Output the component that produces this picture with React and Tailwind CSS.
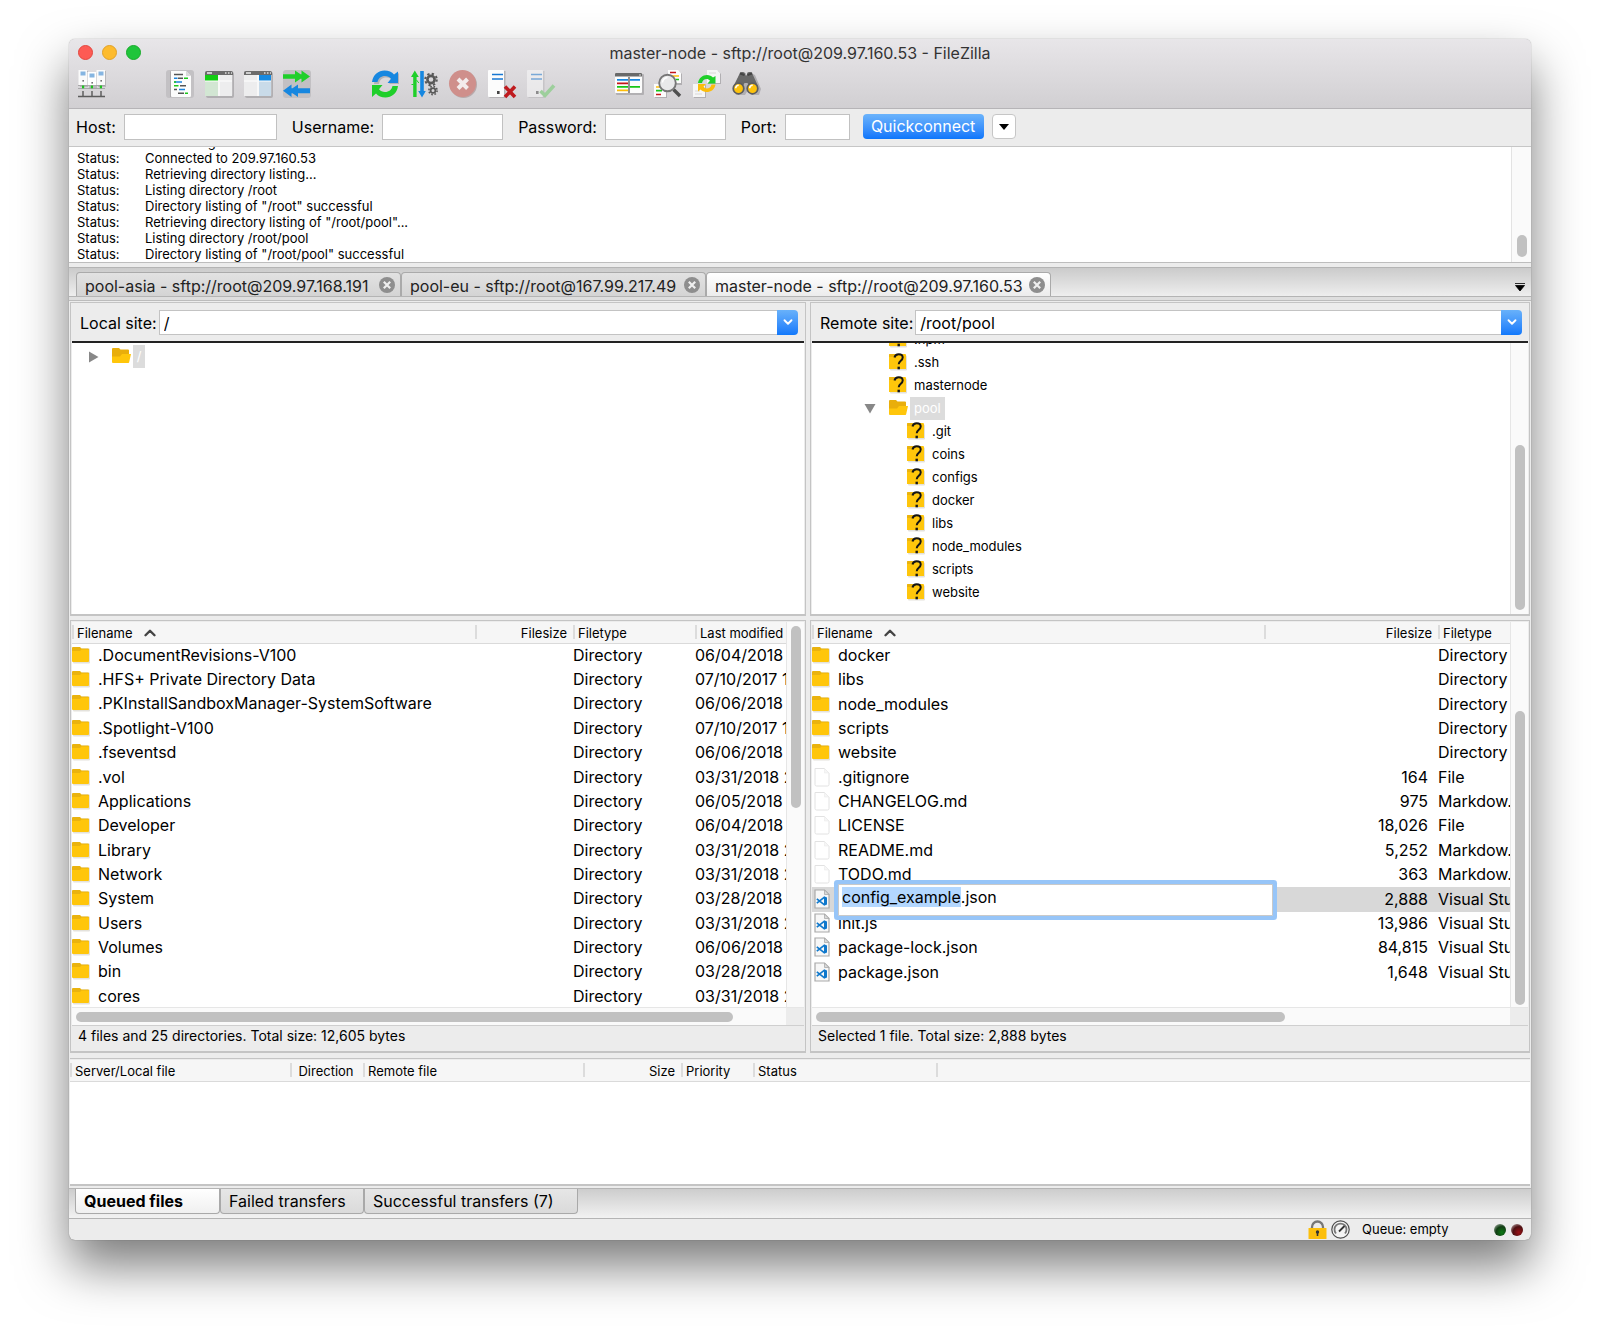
import { useEffect, useRef } from 'react';
import { ChevronDown, ChevronUp } from 'lucide-react';

const LOG = [
  'Connecting to 209.97.160.53...',
  'Connected to 209.97.160.53',
  'Retrieving directory listing...',
  'Listing directory /root',
  'Directory listing of "/root" successful',
  'Retrieving directory listing of "/root/pool"...',
  'Listing directory /root/pool',
  'Directory listing of "/root/pool" successful',
];

const SESSIONS = [
  { name: 'pool-asia - sftp://root@209.97.168.191', width: 'w-[325px]' },
  { name: 'pool-eu - sftp://root@167.99.217.49', width: 'w-[305px]' },
  { name: 'master-node - sftp://root@209.97.160.53', width: 'w-[345px]', active: true },
];

const LOCAL_FILES = [
  ['.DocumentRevisions-V100', '06/04/2018 10:12:41'],
  ['.HFS+ Private Directory Data', '07/10/2017 12:01:17'],
  ['.PKInstallSandboxManager-SystemSoftware', '06/06/2018 09:44:02'],
  ['.Spotlight-V100', '07/10/2017 12:03:55'],
  ['.fseventsd', '06/06/2018 09:40:30'],
  ['.vol', '03/31/2018 22:18:09'],
  ['Applications', '06/05/2018 17:26:12'],
  ['Developer', '06/04/2018 11:02:48'],
  ['Library', '03/31/2018 22:31:20'],
  ['Network', '03/31/2018 22:18:09'],
  ['System', '03/28/2018 14:55:31'],
  ['Users', '03/31/2018 22:31:22'],
  ['Volumes', '06/06/2018 09:41:16'],
  ['bin', '03/28/2018 14:57:10'],
  ['cores', '03/31/2018 22:18:10'],
];

const REMOTE_FILES = [
  { name: 'docker', type: 'Directory', kind: 'folder' },
  { name: 'libs', type: 'Directory', kind: 'folder' },
  { name: 'node_modules', type: 'Directory', kind: 'folder' },
  { name: 'scripts', type: 'Directory', kind: 'folder' },
  { name: 'website', type: 'Directory', kind: 'folder' },
  { name: '.gitignore', size: '164', type: 'File', kind: 'file' },
  { name: 'CHANGELOG.md', size: '975', type: 'Markdow...', kind: 'file' },
  { name: 'LICENSE', size: '18,026', type: 'File', kind: 'file' },
  { name: 'README.md', size: '5,252', type: 'Markdow...', kind: 'file' },
  { name: 'TODO.md', size: '363', type: 'Markdow...', kind: 'file' },
  { name: 'config_example.json', size: '2,888', type: 'Visual Studio Code', kind: 'code', renaming: true },
  { name: 'init.js', size: '13,986', type: 'Visual Studio Code', kind: 'code' },
  { name: 'package-lock.json', size: '84,815', type: 'Visual Studio Code', kind: 'code' },
  { name: 'package.json', size: '1,648', type: 'Visual Studio Code', kind: 'code' },
];

const POOL_CHILDREN = ['.git', 'coins', 'configs', 'docker', 'libs', 'node_modules', 'scripts', 'website'];

/* ---------- toolbar icons ---------- */

function Icon({ children }) {
  return (
    <svg viewBox="0 0 28 28" className="w-7 h-7 overflow-visible" aria-hidden="true">
      {children}
    </svg>
  );
}

function SiteManagerIcon() {
  return (
    <Icon>
      <g fill="#b9b7ba">
        <rect x="2" y="1" width="8" height="16" />
        <rect x="20" y="1" width="8" height="16" />
        <rect x="11" y="3" width="8" height="16" />
      </g>
      <rect x="0.500" y="0" width="8.500" height="15" fill="#fafafa" />
      <rect x="18.500" y="0" width="8.500" height="15" fill="#fafafa" />
      <rect x="9.500" y="2" width="8.500" height="14" fill="#fff" />
      <g fill="#86b5e1">
        <rect x="2.500" y="1.500" width="5" height="4" />
        <rect x="20.500" y="1.500" width="5" height="4" />
        <rect x="11.500" y="3.500" width="5" height="4" />
      </g>
      <g fill="#555">
        <rect x="4.500" y="10" width="1.300" height="1.600" />
        <rect x="22.500" y="10" width="1.300" height="1.600" />
        <rect x="13.500" y="12" width="1.300" height="1.600" />
      </g>
      <path d="M0 15.500h27M0 18.500h27" stroke="#a3a1a4" strokeWidth="0.900" />
      <g fill="#1fc21f">
        <rect x="4" y="15.500" width="2.200" height="2.800" />
        <rect x="12.800" y="15.500" width="2.200" height="2.800" />
        <rect x="21.800" y="15.500" width="2.200" height="2.800" />
      </g>
      <path d="M5 21v5M14 21v5M23 21v5" stroke="#666" strokeWidth="1.600" />
      <path d="M0 26.500h27" stroke="#5c5c5c" strokeWidth="1.700" />
    </Icon>
  );
}

function LogIcon() {
  return (
    <Icon>
      <rect x="0" y="0" width="28" height="28" rx="3" fill="#c3c1c4" />
      <path d="M4 1.500h16l5 5V27H4z" fill="#aaa8ab" />
      <path d="M5 1h15l5 5v20a1 1 0 0 1-1 1H6a1 1 0 0 1-1-1z" fill="#fcfcfc" />
      <path d="M20 1l5 5h-5z" fill="#dadada" />
      <g strokeWidth="1.500">
        <path d="M8 4.500h9M12 8.300h5M14 15.800h6M8 19.500h3M12 23.300h6" stroke="#555" />
        <path d="M8 8.300h3.500M8 12h8M13 19.500h6" stroke="#1a83dc" />
        <path d="M18 8.300h4M8 15.800h4.500M19 23.300h3M8 12h2" stroke="#1cc81c" />
      </g>
    </Icon>
  );
}

function LocalPaneIcon({ mirrored }) {
  return (
    <Icon>
      <rect x="1" y="2" width="28" height="26" rx="2" fill="#b1afb2" />
      <rect x="0" y="1" width="28" height="25" rx="2" fill="#bcbabd" />
      <path d="M0 3a2 2 0 0 1 2-2h24a2 2 0 0 1 2 2v2H0z" fill="#6b6b6b" />
      <path d="M2 3h5" stroke="#eee" strokeWidth="1.500" />
      <path d="M20 3h1.500M23 3h1.500M26 3h1" stroke="#ddd" strokeWidth="1.500" />
      <rect x="0" y="5" width="13" height="6" fill={mirrored ? '#ededee' : '#14cd14'} />
      <rect x="0" y="11" width="13" height="15" fill={mirrored ? '#ededee' : '#d2e6d3'} />
      <rect x="13" y="5" width="2" height="21" fill="#f8f8f8" />
      <rect x="15" y="5" width="12" height="6" fill={mirrored ? '#1689e0' : '#ededee'} />
      <rect x="15" y="11" width="12" height="15" fill={mirrored ? '#c9dbe9' : '#ededee'} />
      <path d="M0 11h13M15 11h12" stroke="#fff" />
    </Icon>
  );
}

function QueueIcon() {
  return (
    <Icon>
      <rect x="0" y="0" width="28" height="28" rx="3" fill="#c2c0c3" />
      <path d="M0 4.200h12V0.500l5.500 3.700h1V0.500L27 6.500l-8.500 6V8.800h-1L12 12.500V8.800H0z" fill="#1fcf2a" />
      <path d="M27 18.200H15v-3.700l-5.500 3.700h-1v-3.700L0 20.700l8.500 6.300v-3.700h1L15 27v-3.700h12z" fill="#1787e0" />
    </Icon>
  );
}

function RefreshIcon() {
  return (
    <Icon>
      <path d="M2 13C3 5 8 1 14 1c4 0 7 1.500 9 4l4-3v11H17l3.500-4C19 7.500 17 6.500 14.500 6.500 10 6.500 7.500 9 7 13z" fill="#b4b2b5" transform="translate(1 1)" />
      <path d="M1 12C2 4.500 7.500 0.500 13.500 0.500c4 0 7.500 1.500 9.500 4L27 1.500V13H16.500l3.500-4.200C18.500 7 16.500 6 14 6c-4 0-6.700 2.200-7.500 6z" fill="#1787e0" />
      <path d="M27 16c-1 7.500-6.500 11.500-12.500 11.500-4 0-7.500-1.500-9.500-4L1 27V15h10.500L8 19.200C9.500 21 11.500 22 14 22c4 0 6.700-2.200 7.500-6z" fill="#1fcf2a" />
    </Icon>
  );
}

function ProcessQueueIcon() {
  return (
    <Icon>
      <path d="M4.800 0.500L1 7h2.200v20h3.400V7h2.200z" fill="#1fcf2a" />
      <path d="M1.500 14.500h2M6.500 10l2.300 3" stroke="#1fcf2a" />
      <path d="M12 27.500L8.200 21h2V1h3.600v20h2z" fill="#1787e0" />
      <g fill="none" stroke="#585858">
        <circle cx="21" cy="9.500" r="3.600" strokeWidth="2.600" />
        <circle cx="21" cy="9.500" r="5.800" strokeWidth="2" strokeDasharray="2.280 2.280" />
        <circle cx="23" cy="20.500" r="2.400" strokeWidth="1.800" />
        <circle cx="23" cy="20.500" r="4.100" strokeWidth="1.600" strokeDasharray="1.610 1.610" />
      </g>
    </Icon>
  );
}

function CancelIcon() {
  return (
    <Icon>
      <circle cx="14.500" cy="14.500" r="13.500" fill="#b8a9aa" />
      <circle cx="13.500" cy="13.500" r="13.500" fill="#cf8f8b" />
      <path d="M9 9l9.500 9.500M18.500 9L9 18.500" stroke="#f3ecec" strokeWidth="4" />
    </Icon>
  );
}

function ServerIcon({ action }) {
  const faded = action === 'reconnect';
  return (
    <Icon>
      <g opacity={faded ? 0.5 : 1}>
        <rect x="1.500" y="1" width="16" height="27" fill="#b5b3b6" />
        <rect x="0" y="0" width="16" height="27" rx="1" fill="#fcfcfc" />
        <path d="M4 4.500h11M4 9h11" stroke="#1777d2" strokeWidth="1.700" />
        <rect x="9" y="21" width="2.600" height="3" fill="#444" />
      </g>
      {faded ? (
        <path d="M13.500 21l4.500 4.500L27 15.500" fill="none" stroke="#9dcf9c" strokeWidth="3.600" />
      ) : (
        <path d="M17 16.500l10 10.500M27 16.500L17 27" stroke="#bf1b1f" strokeWidth="3.600" />
      )}
    </Icon>
  );
}

function FilterIcon() {
  return (
    <Icon>
      <rect x="1" y="4" width="28" height="21" rx="1" fill="#b2b0b3" />
      <rect x="0" y="3" width="27" height="20" rx="1" fill="#fcfcfc" />
      <path d="M0 6.500V4a1 1 0 0 1 1-1h25a1 1 0 0 1 1 1v2.500z" fill="#696969" />
      <path d="M24 5h2" stroke="#ddd" strokeWidth="1.200" />
      <g strokeWidth="1.700">
        <path d="M2 9.800h11M15 9.800h10" stroke="#1787e0" />
        <path d="M2 13.300h11" stroke="#c4171b" />
        <path d="M2 16.800h11M15 16.800h10" stroke="#17c617" />
        <path d="M2 20.300h11" stroke="#fdbd0a" />
      </g>
      <path d="M14 7v16" stroke="#555" strokeWidth="1.300" />
    </Icon>
  );
}

function CompareIcon() {
  return (
    <Icon>
      <path d="M15 0h9l3 3v11H15zM0 14h12v13H0z" fill="#b1afb2" transform="translate(1 1)" />
      <path d="M14 0h10l3 3v10H14z" fill="#fcfcfc" />
      <path d="M0 14h12v13H0z" fill="#fcfcfc" />
      <g strokeWidth="1.700">
        <path d="M16 2.500h6M2 24.500h5" stroke="#c4171b" />
        <path d="M18 6h7M2 17h4" stroke="#fdbd0a" />
        <path d="M22 9.500h3M2 20.700h6" stroke="#17c617" />
      </g>
      <path d="M19.500 19.500l6.500 6.500" stroke="#4f4f4f" strokeWidth="3.400" />
      <circle cx="13.500" cy="13" r="8.300" fill="#e9e9ea" stroke="#777" strokeWidth="1.900" />
      <path d="M8.500 12.500a5.500 5.500 0 0 1 5-5" fill="none" stroke="#fff" strokeWidth="1.600" />
    </Icon>
  );
}

function SyncBrowseIcon() {
  return (
    <Icon>
      <path d="M14 0h10l3 3v10H14zM0 14h12v13H0z" fill="#b1afb2" transform="translate(1 1)" />
      <path d="M14 0h10l3 3v10H14z" fill="#f6f6f6" />
      <path d="M0 14h12v13H0z" fill="#f6f6f6" />
      <path d="M16 3h7M2 24h7M2 21h5" stroke="#d8d8d8" strokeWidth="1.200" />
      <path d="M5 13c.8-5 4.500-8 9-8 2.500 0 4.600.9 6 2.500L22.500 6v7.500h-8l2.500-2.800C16 9.500 15 9 13.700 9c-2.500 0-4.200 1.500-4.700 4z" fill="#1fcf2a" />
      <path d="M22.500 14.500c-.8 5-4.500 7.500-9 7.500-2.500 0-4.600-.9-6-2.500L5 21.500V14h8l-2.500 2.800c1 1.200 2 1.700 3.300 1.700 2.500 0 4.200-1.500 4.700-4z" fill="#fbbd0c" />
    </Icon>
  );
}

function BinocularsIcon() {
  return (
    <Icon>
      <path d="M6 4l4-2h3v5h2V2h3l4 2 6 14-2 6h-8l-3-5-3 5H3l-2-6z" fill="#b1afb2" transform="translate(1 1)" />
      <path d="M7.500 4a2 2 0 0 1 2-2h1.500a2 2 0 0 1 2 2l.5 1.500h1L15 4a2 2 0 0 1 2-2h1.500a2 2 0 0 1 2 2l5.500 12H17l-1.500-3h-3l-1.500 3H1.500z" fill="#686868" />
      <path d="M8 3.500l4.500 1.500M20 3.500L15.500 5" stroke="#444" strokeWidth="2" />
      <circle cx="6.500" cy="18.500" r="5.300" fill="#fdc20c" stroke="#5e5e5e" strokeWidth="1.700" />
      <circle cx="20.500" cy="18.500" r="5.300" fill="#fdc20c" stroke="#5e5e5e" strokeWidth="1.700" />
      <path d="M3.700 18.200a3 3 0 0 1 3-3M17.700 18.200a3 3 0 0 1 3-3" fill="none" stroke="#fff" strokeWidth="1.500" />
    </Icon>
  );
}

const TOOLBAR = [
  [['Site Manager', <SiteManagerIcon />]],
  [
    ['Toggle message log', <LogIcon />],
    ['Toggle local directory tree', <LocalPaneIcon />],
    ['Toggle remote directory tree', <LocalPaneIcon mirrored />],
    ['Toggle transfer queue', <QueueIcon />],
  ],
  [
    ['Refresh', <RefreshIcon />],
    ['Process queue', <ProcessQueueIcon />],
    ['Cancel', <CancelIcon />],
    ['Disconnect', <ServerIcon action="disconnect" />],
    ['Reconnect', <ServerIcon action="reconnect" />],
  ],
  [
    ['Filename filters', <FilterIcon />],
    ['Directory comparison', <CompareIcon />],
    ['Synchronized browsing', <SyncBrowseIcon />],
    ['Search', <BinocularsIcon />],
  ],
];

/* ---------- file icons ---------- */

function FolderIcon() {
  return (
    <svg viewBox="0 0 18 18" className="w-[18px] h-[18px] shrink-0" aria-hidden="true">
      <rect x="1" y="2.500" width="17" height="15" rx="1" fill="#e4e2dc" />
      <path d="M0 2a1 1 0 0 1 1-1h7l1.500 1.500H16a1 1 0 0 1 1 1V8H0z" fill="#eab30e" />
      <path d="M0 5h8l1.500-1.500H17V15a1 1 0 0 1-1 1H1a1 1 0 0 1-1-1z" fill="#ffc60b" />
    </svg>
  );
}

function OpenFolderIcon() {
  return (
    <svg viewBox="0 0 20 18" className="w-5 h-[18px] mb-[2px] shrink-0" aria-hidden="true">
      <path d="M0 2a1 1 0 0 1 1-1h6l1.500 1.500H16a1 1 0 0 1 1 1V14H0z" fill="#e9ae0b" />
      <path d="M0 16V9.500h8L10 7h9l-1.800 8a1 1 0 0 1-1 1H1a1 1 0 0 1-1-1z" fill="#ffc60b" />
    </svg>
  );
}

function UnknownFolderIcon() {
  return (
    <svg viewBox="0 0 18 18" className="w-[18px] h-[18px] mb-[2px] shrink-0" aria-hidden="true">
      <rect x="1" y="2.500" width="17" height="15" rx="1" fill="#e4e2dc" />
      <path d="M0 2a1 1 0 0 1 1-1h15a1 1 0 0 1 1 1v14H0z" fill="#ffc60b" />
      <path d="M0 2a1 1 0 0 1 1-1h6v2L5 4H0z" fill="#eab30e" />
      <path d="M5.500 4.500C6 2.300 7.500 1.200 9.700 1.200c2.400 0 4 1.300 4 3.300 0 3.200-4 3.200-4 6.700" fill="none" stroke="#151515" strokeWidth="2" />
      <rect x="8.500" y="13.700" width="2.400" height="2.600" fill="#151515" />
    </svg>
  );
}

function PageIcon() {
  return (
    <svg viewBox="0 0 18 20" className="w-[18px] h-5 shrink-0" aria-hidden="true">
      <path d="M3 1.500h9.500L17 6v11.500a1.500 1.500 0 0 1-1.500 1.500H4.500A1.500 1.500 0 0 1 3 17.500z" fill="#fff" stroke="#e2e2e2" />
      <path d="M12.500 1.500V6H17" fill="#f6f6f6" stroke="#ececec" strokeWidth="0.700" />
    </svg>
  );
}

function CodeFileIcon() {
  return (
    <svg viewBox="0 0 18 20" className="w-[18px] h-5 shrink-0" aria-hidden="true">
      <path d="M3 1h9.500L17 5.500V19H3z" fill="#f7f7f7" stroke="#a9a9a9" strokeWidth="1.200" />
      <path d="M12.500 1v4.500H17z" fill="#d9d9d9" stroke="#a9a9a9" strokeWidth="0.800" />
      <path d="M4.800 9.800l7.700 6M4.800 14.200l7.700-6" stroke="#0f78cc" strokeWidth="1.700" />
      <path d="M12 7.300l3 1.200v7l-3 1.200z" fill="#0f78cc" />
    </svg>
  );
}

const FILE_ICONS = { folder: FolderIcon, file: PageIcon, code: CodeFileIcon };

/* ---------- shared bits ---------- */

function CloseBadge({ label }) {
  return (
    <button type="button" aria-label={label} className="w-4 h-4">
      <svg viewBox="0 0 16 16" className="w-4 h-4">
        <circle cx="8" cy="8" r="8" fill="#8e8e8e" />
        <path d="M4.800 4.800l6.400 6.400M11.200 4.800l-6.400 6.400" stroke="#efefef" strokeWidth="2.200" />
      </svg>
    </button>
  );
}

function SortHeader() {
  return (
    <span className="h-4 flex items-center gap-2">
      Filename
      <ChevronUp className="w-[18px] h-[18px] text-[#444]" strokeWidth={3.2} />
    </span>
  );
}

function Th({ children, className = '' }) {
  return (
    <th className={`p-0 font-normal border-b border-[#dadada] ${className}`}>
      <div className="h-[14px] pl-[3px] pr-[6px] border-l-2 border-[#dcdcdc] leading-4">{children}</div>
    </th>
  );
}

// Address row + black rule on top of each directory tree
function SiteBar({ id, label, value }) {
  return (
    <div className="h-10 border-b-2 border-[#222] flex items-center pl-2 pr-[6px]">
      <label htmlFor={id} className="text-base pt-[2px] pr-[2px] whitespace-nowrap">{label}</label>
      <input
        id={id}
        defaultValue={value}
        className="flex-1 min-w-0 h-[25px] bg-white border border-r-0 border-[#c3c3c3] px-1 pt-[2px] text-base outline-none"
      />
      <button
        type="button"
        aria-label={`${label} history`}
        className="w-[21px] h-[25px] rounded-r-[4px] bg-linear-to-b from-[#68b1fa] to-[#0f78fb] text-white flex items-center justify-center"
      >
        <ChevronDown className="w-[14px] h-[14px]" strokeWidth={3.2} />
      </button>
    </div>
  );
}

function TreeRow({ icon, name, nested }) {
  return (
    <div className={`h-[23px] flex items-center gap-[7px] shrink-0 ${nested ? 'pl-[95px]' : 'pl-[77px]'}`}>
      {icon}
      <span className="text-[13px]">{name}</span>
    </div>
  );
}

function RenameInput({ value }) {
  const ref = useRef(null);

  // preselect the base name, not the extension
  useEffect(() => {
    ref.current.focus();
    ref.current.setSelectionRange(0, value.lastIndexOf('.'));
  }, [value]);

  return (
    <input
      ref={ref}
      aria-label="Rename file"
      defaultValue={value}
      className="absolute left-[26px] -right-[9px] -top-[3px] h-8 pl-[3px] pb-[6px] bg-white border border-[#c9c9c9] rounded-[1px] ring-4 ring-[#97c5f8] outline-none text-base z-10 selection:bg-[#b3d7ff] selection:text-black"
    />
  );
}

function HScroll({ thumb }) {
  return (
    <div className="flex h-[18px] border-t border-[#e6e6e6]">
      <div className="flex-1 bg-[#fafafa] px-1 pt-1">
        <div className={`h-[10px] rounded-full bg-[#c1c1c1] ${thumb}`} />
      </div>
      <div className="w-[18px] bg-[#ececec]" />
    </div>
  );
}

function VScroll({ thumb }) {
  return (
    <div className="w-[18px] shrink-0 bg-[#fafafa] border-l border-[#e6e6e6] flex flex-col items-center">
      <div className={`w-[10px] rounded-full bg-[#c1c1c1] ${thumb}`} />
    </div>
  );
}

function ListStatus({ children }) {
  return (
    <div className="h-[26px] border-t border-[#cfcfcf] pl-[6px] flex items-center pb-[6px] text-sm">{children}</div>
  );
}

const panel = 'border border-b-2 border-[#c4c4c4] bg-[#ececec] px-px';
const fileTable = 'w-full table-fixed border-collapse text-base whitespace-nowrap';

function LocalPane() {
  return (
    <section className="flex flex-col gap-1 min-w-0">
      <div className={panel}>
        <SiteBar id="local-site" label="Local site:" value="/" />
        <div className="h-[271px] bg-white pt-[2px]">
          <div className="h-[23px] flex items-center pl-[17px]">
            <svg viewBox="0 0 10 12" className="w-[10px] h-3" aria-hidden="true"><path d="M0 0.500l9.500 5.500L0 11.500z" fill="#888" /></svg>
            <span className="pl-[13px]"><OpenFolderIcon /></span>
            <span className="ml-px h-[23px] w-3 bg-[#dcdcdc] text-white text-[13px] leading-[23px] text-center">/</span>
          </div>
        </div>
      </div>

      <div className={`${panel} pt-px`}>
        <div className="flex h-[385px]">
          <div className="flex-1 min-w-0 overflow-hidden bg-white">
            <table className={`${fileTable} h-[387px]`}>
              <colgroup>
                <col />
                <col className="w-[98px]" />
                <col className="w-[122px]" />
                <col className="w-[91px]" />
              </colgroup>
              <thead>
                <tr className="h-[21px] bg-[#f6f6f6] text-[13px] text-left">
                  <Th><SortHeader /></Th>
                  <Th className="text-right">Filesize</Th>
                  <Th>Filetype</Th>
                  <Th className="overflow-hidden">Last modified</Th>
                </tr>
              </thead>
              <tbody>
                {LOCAL_FILES.map(([name, modified]) => (
                  <tr key={name}>
                    <td className="p-0 pb-[2px]">
                      <div className="flex items-center gap-2 leading-5"><FolderIcon />{name}</div>
                    </td>
                    <td className="p-0"></td>
                    <td className="p-0 pb-[2px] leading-5">Directory</td>
                    <td className="p-0 pb-[2px] leading-5 overflow-hidden">{modified}</td>
                  </tr>
                ))}
              </tbody>
            </table>
          </div>
          <VScroll thumb="mt-1 h-[182px]" />
        </div>
        <HScroll thumb="w-[93%]" />
        <ListStatus>4 files and 25 directories. Total size: 12,605 bytes</ListStatus>
      </div>
    </section>
  );
}

function RemotePane() {
  return (
    <section className="flex flex-col gap-1 min-w-0">
      <div className={panel}>
        <SiteBar id="remote-site" label="Remote site:" value="/root/pool" />
        <div className="h-[271px] bg-white flex">
          <div className="flex-1 flex flex-col justify-end overflow-hidden pb-[10px]">
            <TreeRow icon={<UnknownFolderIcon />} name=".npm" />
            <TreeRow icon={<UnknownFolderIcon />} name=".ssh" />
            <TreeRow icon={<UnknownFolderIcon />} name="masternode" />
            <div className="h-[23px] flex items-center pl-[52px] shrink-0">
              <svg viewBox="0 0 12 10" className="w-3 h-[10px]" aria-hidden="true"><path d="M0.500 0h11L6 9.500z" fill="#888" /></svg>
              <span className="pl-[13px]"><OpenFolderIcon /></span>
              <span className="ml-px px-1 bg-[#dcdcdc] text-white text-[13px] leading-[23px]">pool</span>
            </div>
            {POOL_CHILDREN.map((name) => (
              <TreeRow key={name} icon={<UnknownFolderIcon />} name={name} nested />
            ))}
          </div>
          <VScroll thumb="mt-[102px] h-[165px]" />
        </div>
      </div>

      <div className={`${panel} pt-px`}>
        <div className="flex h-[385px]">
          <div className="flex-1 min-w-0 overflow-hidden bg-white">
            <table className={`${fileTable} h-[363px]`}>
              <colgroup>
                <col />
                <col className="w-[174px]" />
                <col className="w-[72px]" />
              </colgroup>
              <thead>
                <tr className="h-[21px] bg-[#f6f6f6] text-[13px] text-left">
                  <Th><SortHeader /></Th>
                  <Th className="text-right">Filesize</Th>
                  <Th>Filetype</Th>
                </tr>
              </thead>
              <tbody>
                {REMOTE_FILES.map((f) => {
                  const FileIcon = FILE_ICONS[f.kind];
                  return (
                    <tr key={f.name} className={f.renaming ? 'bg-[#d8d8d8]' : ''}>
                      <td className="p-0 pb-[2px] relative">
                        <div className="flex items-center gap-2 leading-5">
                          <FileIcon />
                          {f.renaming ? <RenameInput value={f.name} /> : f.name}
                        </div>
                      </td>
                      <td className="p-0 pb-[2px] pr-[10px] leading-5 text-right">{f.size}</td>
                      <td className="p-0 pb-[2px] leading-5 overflow-hidden">{f.type}</td>
                    </tr>
                  );
                })}
              </tbody>
            </table>
          </div>
          <VScroll thumb="mt-[89px] h-[294px]" />
        </div>
        <HScroll thumb="w-[68%]" />
        <ListStatus>Selected 1 file. Total size: 2,888 bytes</ListStatus>
      </div>
    </section>
  );
}

function QuickField({ id, label, type = 'text', width }) {
  return (
    <div className="flex items-center">
      <label htmlFor={id} className="text-base pt-px pr-2">{label}</label>
      <input id={id} type={type} className={`h-[26px] bg-white border border-[#c1c1c1] px-1 outline-none ${width}`} />
    </div>
  );
}

export default function App() {
  return (
    <div className="min-h-screen bg-white px-[69px] pt-[39px] pb-[98px] font-['Inter','Liberation_Sans',sans-serif] text-black">
      <main className="rounded-[6px] overflow-hidden bg-[#ececec] shadow-[0_26px_50px_rgba(0,0,0,0.52),0_0_1px_rgba(0,0,0,0.5)]">
        {/* Title + toolbar */}
        <header className="h-[70px] border-b border-[#b6b4b7] bg-linear-to-b from-[#e8e6e9] to-[#d1cfd2]">
          <div className="h-[31px] grid grid-cols-[1fr_auto_1fr] items-center px-[9px] pb-1">
            <div className="flex gap-[9px]">
              <button type="button" aria-label="Close" className="w-[15px] h-[15px] rounded-full bg-[#fd5b54] border border-[#e2463f]" />
              <button type="button" aria-label="Minimize" className="w-[15px] h-[15px] rounded-full bg-[#fdbb2e] border border-[#e0a028]" />
              <button type="button" aria-label="Zoom" className="w-[15px] h-[15px] rounded-full bg-[#20c53b] border border-[#18ab2b]" />
            </div>
            <h1 className="text-base text-[#333]">master-node - sftp://root@209.97.160.53 - FileZilla</h1>
          </div>
          <div className="flex gap-[60px] pl-[9px]">
            {TOOLBAR.map((group, i) => (
              <div key={i} className="flex gap-[11px]">
                {group.map(([title, icon]) => (
                  <button key={title} type="button" aria-label={title} className="w-7 h-7">{icon}</button>
                ))}
              </div>
            ))}
          </div>
        </header>

        {/* Quickconnect */}
        <form className="h-[38px] border-b border-[#c6c6c6] flex items-center pl-[7px] pb-[2px]" onSubmit={(e) => e.preventDefault()}>
          <div className="flex gap-[15px]">
            <QuickField id="host" label="Host:" width="w-[153px]" />
            <QuickField id="username" label="Username:" width="w-[121px]" />
            <QuickField id="password" label="Password:" type="password" width="w-[121px]" />
            <QuickField id="port" label="Port:" width="w-[65px]" />
          </div>
          <button
            type="submit"
            className="ml-[13px] h-[25px] w-[121px] rounded-[4px] bg-linear-to-b from-[#6bb3fb] to-[#0a76fb] text-white text-base leading-[25px]"
          >
            Quickconnect
          </button>
          <button type="button" aria-label="Recent servers" className="ml-2 w-6 h-[25px] rounded-[4px] bg-white border border-[#c6c6c6] flex items-center justify-center">
            <svg viewBox="0 0 10 6" className="w-[10px] h-[6px]"><path d="M0 0h10L5 6z" fill="#000" /></svg>
          </button>
        </form>

        {/* Message log */}
        <div className="h-[116px] bg-white border-b border-[#bdbdbd] flex">
          <div className="flex-1 flex flex-col justify-end overflow-hidden pl-2">
            {LOG.map((line) => (
              <div key={line} className="flex shrink-0 text-[13px] leading-4">
                <span className="w-[68px]">Status:</span>
                <span>{line}</span>
              </div>
            ))}
          </div>
          <div className="w-5 bg-[#fafafa] border-l border-[#e3e3e3] flex flex-col items-center justify-end pb-[5px]">
            <div className="w-[10px] h-[22px] rounded-full bg-[#c1c1c1]" />
          </div>
        </div>

        {/* Session tabs */}
        <div className="mt-1 h-[30px] border-b border-t border-[#b4b4b4] bg-linear-to-b from-[#cbcbcb] to-[#eeeeee] flex items-end justify-between pl-[7px] pr-[6px]">
          <div className="flex">
            {SESSIONS.map((s) => (
              <div
                key={s.name}
                className={`h-6 flex items-center justify-between pl-2 pr-[5px] rounded-t-[4px] border border-b-0 border-[#aaaaaa] ${s.width} ${s.active ? 'bg-linear-to-b from-white to-[#ececec]' : 'bg-linear-to-b from-[#e2e2e2] to-[#d4d4d4]'}`}
              >
                <span className="text-base pt-[2px] whitespace-nowrap text-[#222]">{s.name}</span>
                <CloseBadge label={`Close ${s.name}`} />
              </div>
            ))}
          </div>
          <button type="button" aria-label="All tabs" className="mb-[5px]">
            <svg viewBox="0 0 10 8" className="w-[10px] h-2"><path d="M0 0.500h10M0.500 2.500h9L5 8z" stroke="#000" strokeWidth="0.800" /></svg>
          </button>
        </div>
        <div className="h-[3px] bg-[#dedede]" />
        <div className="h-[2px] border-t border-[#bcbcbc]" />

        {/* Local / remote */}
        <div className="px-px grid grid-cols-[736fr_720fr] gap-1">
          <LocalPane />
          <RemotePane />
        </div>

        {/* Transfer queue */}
        <div className="mt-[5px] mx-px border-t border-b-2 border-[#c4c4c4] pt-px">
          <div className="h-[124px] bg-white">
            <table className="w-full table-fixed border-collapse text-[13px] whitespace-nowrap">
              <colgroup>
                <col className="w-[220px]" />
                <col className="w-[73px]" />
                <col className="w-[220px]" />
                <col className="w-[98px]" />
                <col className="w-[72px]" />
                <col className="w-[183px]" />
                <col />
              </colgroup>
              <thead>
                <tr className="h-[21px] bg-[#f6f6f6] text-left">
                  <Th>Server/Local file</Th>
                  <Th className="text-center">Direction</Th>
                  <Th>Remote file</Th>
                  <Th className="text-right">Size</Th>
                  <Th>Priority</Th>
                  <Th>Status</Th>
                  <Th />
                </tr>
              </thead>
            </table>
          </div>
        </div>
        <div className="mt-[2px] h-[31px] border-t border-b border-[#b4b4b4] bg-linear-to-b from-[#cdcdcd] to-[#f2f2f2] flex items-start pl-[6px] text-base">
          <button type="button" className="h-[25px] w-[145px] pl-2 text-left font-bold bg-linear-to-b from-white to-[#f0f0f0] border border-t-0 border-[#a9a9a9] rounded-b-[4px]">Queued files</button>
          <button type="button" className="h-[25px] w-[144px] pl-2 text-left bg-linear-to-b from-[#e6e6e6] to-[#dadada] border border-t-0 border-[#a9a9a9] rounded-b-[4px]">Failed transfers</button>
          <button type="button" className="h-[25px] w-[214px] pl-2 text-left bg-linear-to-b from-[#e6e6e6] to-[#dadada] border border-t-0 border-[#a9a9a9] rounded-b-[4px]">Successful transfers (7)</button>
        </div>

        {/* Status bar */}
        <footer className="h-[21px] flex items-center justify-end pr-2 text-[13px]">
          <svg viewBox="0 0 19 19" className="w-[19px] h-[19px]" aria-hidden="true">
            <path d="M4 9V7a5.500 5.500 0 0 1 11 0v2" fill="none" stroke="#777" strokeWidth="2.300" />
            <rect x="0.500" y="8" width="18" height="11" rx="0.500" fill="#fcbf0c" />
            <circle cx="9.500" cy="12" r="1.700" fill="#333" />
            <path d="M9.500 12v4" stroke="#333" strokeWidth="1.600" />
          </svg>
          <svg viewBox="0 0 19 19" className="ml-1 w-[19px] h-[19px]" aria-hidden="true">
            <circle cx="9.500" cy="9.500" r="8.700" fill="#f4f4f4" stroke="#4d4d4d" strokeWidth="1.200" />
            <path d="M5 13.500a6 6 0 1 1 9 0" fill="none" stroke="#777" strokeWidth="1.800" />
            <path d="M8 11.500l5.500-5.500" stroke="#333" strokeWidth="1.800" />
          </svg>
          <span className="ml-3 w-[132px]">Queue: empty</span>
          <span className="w-3 h-3 rounded-full bg-[radial-gradient(circle_at_65%_70%,#0c7a14,#123d14_50%,#c9cec9)]" />
          <span className="ml-[5px] w-3 h-3 rounded-full bg-[radial-gradient(circle_at_65%_70%,#9a1015,#4d1012_50%,#d3c8c8)]" />
        </footer>
      </main>
    </div>
  );
}
